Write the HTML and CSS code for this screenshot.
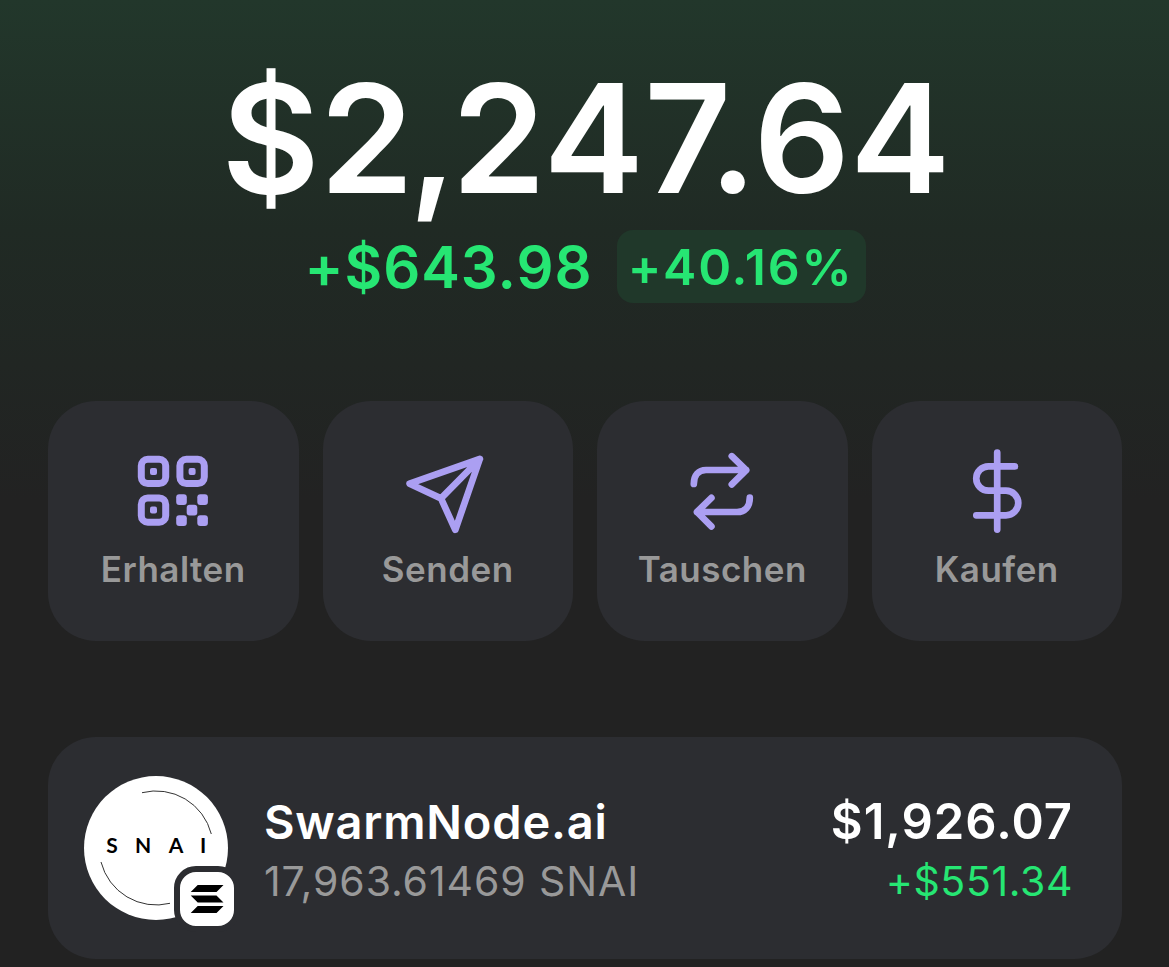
FILE: index.html
```html
<!DOCTYPE html>
<html lang="de">
<head>
  <meta charset="UTF-8" />
  <meta name="viewport" content="width=device-width, initial-scale=1.0"/>
  <title>Wallet</title>
  <link rel="stylesheet" href="styles.css">
</head>
<body>

  <header class="balance">
    <h1 class="total">$<span class="thousands">2,</span>24<span class="decimal">7.</span>64</h1>
    <div class="change">
      <span class="change-amount">+$643.98</span>
      <span class="change-percent">+40.16%</span>
    </div>
  </header>

  <nav class="actions">
    <button class="action">
      <svg class="icon" viewBox="0 0 96 96">
        <g stroke-width="7">
          <rect x="16.3" y="16.2" width="24.4" height="24.4" rx="6.5"/>
          <rect x="54.9" y="16.2" width="24.4" height="24.4" rx="6.5"/>
          <rect x="16.3" y="54.9" width="24.4" height="24.4" rx="6.5"/>
        </g>
        <g class="solid">
          <rect x="25" y="25" width="7" height="7" rx="2"/>
          <rect x="63.6" y="25" width="7" height="7" rx="2"/>
          <rect x="25" y="63.6" width="7" height="7" rx="2"/>
          <rect x="51.2" y="51.3" width="10.6" height="10.6" rx="3"/>
          <rect x="72.3" y="51.3" width="10.6" height="10.6" rx="3"/>
          <rect x="61.7" y="61.8" width="10.6" height="10.6" rx="3"/>
          <rect x="51.2" y="72.3" width="10.6" height="10.6" rx="3"/>
          <rect x="72.3" y="72.3" width="10.6" height="10.6" rx="3"/>
        </g>
      </svg>
      <span>Erhalten</span>
    </button>
    <button class="action">
      <svg class="icon" viewBox="0 0 96 96">
        <path d="M79.8 16 9.6 40.7 41 55.4 55.3 86.8ZM79.8 16 41 55.4"/>
      </svg>
      <span>Senden</span>
    </button>
    <button class="action">
      <svg class="icon" viewBox="0 0 96 96">
        <path d="M19.8 41C19.8 32 24.5 27 32 27H72.2M57.8 13.2 72.2 27.2 57.8 41.4"/>
        <path d="M75.8 54.7C75.8 63.5 71 69 63 69H23M37.4 54.9 23 69 37.4 83.4"/>
      </svg>
      <span>Tauschen</span>
    </button>
    <button class="action">
      <svg class="icon" viewBox="0 0 96 96">
        <path d="M48.2 9.6V86.6M65.9 23.4H39.4A12.15 12.15 0 0 0 39.4 47.7H57A12.3 12.3 0 0 1 57 72.3H27.3"/>
      </svg>
      <span>Kaufen</span>
    </button>
  </nav>

  <section class="token">
    <div class="avatar">
      <svg class="avatar-logo" viewBox="0 0 144 144">
        <path d="M58 16.7A57 57 0 0 1 127.3 58M17 86A57 57 0 0 0 86 127.3"/>
        <text x="22.3 51 84.8 116" y="77">SNAI</text>
      </svg>
      <svg class="chain" viewBox="0 0 54 54">
        <path d="M17.7 13H43.5L36.5 20H10.7ZM10.7 23.5H36.5L43.5 30.5H17.7ZM17.7 34H43.5L36.5 41H10.7Z"/>
      </svg>
    </div>
    <div class="info">
      <div class="name">SwarmNode.ai</div>
      <div class="amount">17,963.61469 SNAI</div>
    </div>
    <div class="value">
      <div class="price">$1,926.07</div>
      <div class="gain">+$551.34</div>
    </div>
  </section>

</body>
</html>
```
FILE: styles.css
```css
/* ─── Reset & Body ───────────────────────────────────────────────────────── */
* { box-sizing: border-box; margin: 0; padding: 0; }
body {
  height: 967px;
  padding: 46px 47px 0 48px;
  background: #222 linear-gradient(#22372b 0, #202a24 230px, #222 500px) no-repeat;
  color: #fff;
  font-family: Inter, sans-serif;
  white-space: nowrap;
  overflow: hidden;
}

/* ─── Balance ────────────────────────────────────────────────────────────── */
.balance { text-align: center; }
.total {
  font-size: 151px;
  font-weight: 600;
  line-height: 184px;
  text-indent: 2px;
}
.thousands { letter-spacing: -5px; }
.decimal { letter-spacing: -3.5px; }
.change {
  display: flex;
  align-items: center;
  justify-content: center;
  gap: 24px;
  color: #26e673;
}
.change-amount {
  font-size: 58px;
  font-weight: 600;
  letter-spacing: 1px;
}
.change-percent {
  padding: 1px 12px 0 11px;
  border-radius: 16px;
  background: #20382a;
  font-size: 50px;
  font-weight: 600;
  line-height: 72px;
  letter-spacing: 1.8px;
}

/* ─── Actions ────────────────────────────────────────────────────────────── */
.actions {
  display: grid;
  grid-template-columns: repeat(4, 1fr);
  gap: 24px;
  margin-top: 98px;
}
.action {
  display: flex;
  flex-direction: column;
  align-items: center;
  gap: 8px;
  height: 240px;
  padding-top: 42px;
  border: none;
  border-radius: 48px;
  background: #2c2d31;
  color: #999;
  font: 600 35px/44px Inter, sans-serif;
  letter-spacing: 0.5px;
}
.icon {
  width: 96px;
  height: 96px;
  fill: none;
  stroke: #ab9ff2;
  stroke-width: 6.7;
  stroke-linecap: round;
  stroke-linejoin: round;
}
.icon .solid { fill: #ab9ff2; stroke: none; }

/* ─── Token Row ──────────────────────────────────────────────────────────── */
.token {
  display: flex;
  align-items: center;
  gap: 36px;
  height: 222px;
  margin-top: 96px;
  padding: 0 49px 0 36px;
  border-radius: 48px;
  background: #2c2d31;
}
.avatar {
  position: relative;
  width: 144px;
  height: 144px;
}
.avatar-logo {
  display: block;
  border-radius: 50%;
  background: #fff;
  fill: none;
  stroke: #333;
  stroke-width: 1;
}
.avatar-logo text {
  fill: #000;
  stroke: none;
  font: 700 21px Lato, sans-serif;
}
.chain {
  position: absolute;
  right: -12px;
  bottom: -12px;
  width: 66px;
  height: 66px;
  border: 6px solid #2c2d31;
  border-radius: 22px;
  background: #fff;
}
.info, .value { padding-top: 6px; }
.info { flex: 1; }
.value { text-align: right; }
.name, .price {
  font-size: 47px;
  font-weight: 600;
  line-height: 60px;
  letter-spacing: 0.8px;
}
.price {
  font-size: 49px;
  letter-spacing: 1px;
}
.amount, .gain {
  color: #999;
  font-size: 41px;
  line-height: 58px;
  letter-spacing: 0.9px;
}
.gain {
  color: #26e673;
  letter-spacing: 0.6px;
}
```
